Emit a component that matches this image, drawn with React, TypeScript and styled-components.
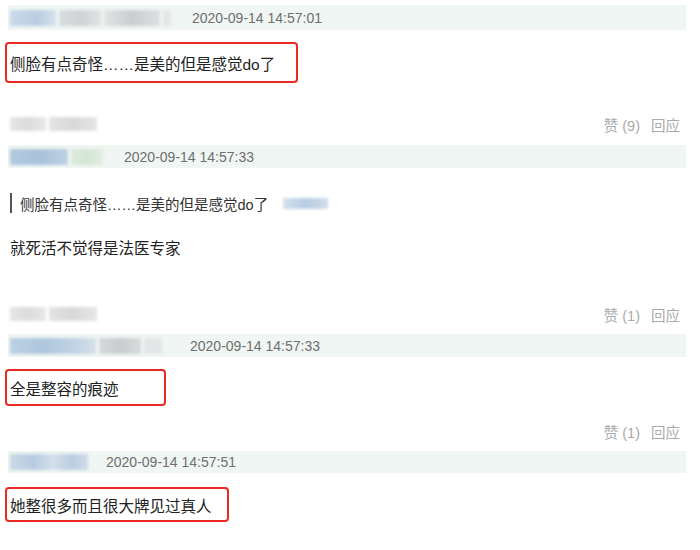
import styled, { createGlobalStyle } from 'styled-components';

const GlobalStyle = createGlobalStyle`
  body {
    margin: 0;
    background: #fff;
    font-family: 'Liberation Sans', Arial, 'Noto Sans CJK SC', sans-serif;
    color: #222;
  }
`;

const App: React.FC = () => {
  return (
    <Page>
      <GlobalStyle />

      <HeaderBar $top={5} $h={25}>
        <Names>
          <Blur $w={46} $bg="linear-gradient(90deg,#c9d9e9,#b9cde2 60%,#d6e2ec)" />
          <Blur $w={42} $bg="linear-gradient(90deg,#dadddf,#cfd3d6,#e0e3e4)" />
          <Blur $w={56} $bg="linear-gradient(90deg,#e2e5e6,#c9cdd0 50%,#dde0e1)" />
          <Blur $w={8} $bg="#e4e7e8" />
        </Names>
        <Time $left={21}>2020-09-14 14:57:01</Time>
      </HeaderBar>

      <Marked $top={12} $w={293} $h={41}>
        侧脸有点奇怪……是美的但是感觉do了
      </Marked>

      <Actions $top={31} likes={9} />

      <HeaderBar $top={11} $h={23}>
        <Names>
          <Blur $w={58} $bg="linear-gradient(90deg,#b2c9df,#a9c2db 50%,#bcd0e3)" />
          <Blur $w={32} $bg="linear-gradient(90deg,#dde9dc,#d3e6d2,#e2ede0)" />
        </Names>
        <Time $left={21}>2020-09-14 14:57:33</Time>
      </HeaderBar>

      <Quote $top={25}>
        侧脸有点奇怪……是美的但是感觉do了
        <Blur $w={45} $h={11} $bg="linear-gradient(90deg,#d3e0ec,#b8cde2 50%,#cfdcea)" />
      </Quote>

      <Plain $top={26}>就死活不觉得是法医专家</Plain>

      <Actions $top={45} likes={1} />

      <HeaderBar $top={10} $h={23}>
        <Names>
          <Blur $w={86} $bg="linear-gradient(90deg,#bcd0e3,#aec6dd 40%,#c4d5e5 80%,#d5e0ea)" />
          <Blur $w={42} $bg="linear-gradient(90deg,#d6dadc,#c8cccf,#d8dcdd)" />
          <Blur $w={18} $bg="#e3e6e7" />
        </Names>
        <Time $left={28}>2020-09-14 14:57:33</Time>
      </HeaderBar>

      <Marked $top={12} $w={161} $h={37}>
        全是整容的痕迹
      </Marked>

      <Actions $top={15} likes={1} hideLeft />

      <HeaderBar $top={10} $h={22}>
        <Names>
          <Blur $w={78} $bg="linear-gradient(90deg,#cbd9e6,#b7cbe0 30%,#d4dfe9 55%,#b9cde1 80%,#d0dce8)" />
        </Names>
        <Time $left={18}>2020-09-14 14:57:51</Time>
      </HeaderBar>

      <Marked $top={14} $w={224} $h={35}>
        她整很多而且很大牌见过真人
      </Marked>
    </Page>
  );
};

const Actions: React.FC<{ $top: number; likes: number; hideLeft?: boolean }> = ({
  $top,
  likes,
  hideLeft,
}) => (
  <ActionRow $top={$top}>
    {hideLeft ? (
      <span />
    ) : (
      <Names>
        <Blur $w={36} $h={14} $bg="linear-gradient(90deg,#e6e6e6,#dcdcdc,#e8e8e8)" />
        <Blur $w={48} $h={14} $bg="linear-gradient(90deg,#e3e3e3,#d8d8d8 50%,#e6e6e6)" />
      </Names>
    )}
    <ActionLinks>
      <span>赞 ({likes})</span>
      <span>回应</span>
    </ActionLinks>
  </ActionRow>
);

const Page = styled.div`
  width: 678px;
  padding: 0 14px 0 8px;
  display: flex;
  flex-direction: column;
  align-items: flex-start;
`;

const HeaderBar = styled.div<{ $top: number; $h: number }>`
  align-self: stretch;
  margin-top: ${(p) => p.$top}px;
  height: ${(p) => p.$h}px;
  background: #f0f6f3;
  display: flex;
  align-items: center;
  padding-left: 2px;
`;

const Names = styled.div`
  display: flex;
  align-items: center;
  gap: 3px;
`;

const Blur = styled.span<{ $w: number; $h?: number; $bg: string }>`
  display: inline-block;
  width: ${(p) => p.$w}px;
  height: ${(p) => p.$h ?? 16}px;
  background: ${(p) => p.$bg};
  filter: blur(1.5px);
  vertical-align: middle;
`;

const Time = styled.span<{ $left: number }>`
  margin-left: ${(p) => p.$left}px;
  font-size: 14px;
  color: #6f6f6f;
`;

const Marked = styled.div<{ $top: number; $w: number; $h: number }>`
  margin-top: ${(p) => p.$top}px;
  margin-left: -3px;
  width: ${(p) => p.$w}px;
  height: ${(p) => p.$h}px;
  box-sizing: border-box;
  border: 2.5px solid #ec2a24;
  border-radius: 4px;
  display: flex;
  align-items: center;
  padding-left: 3px;
  font-size: 15.5px;
  color: #222;
  white-space: nowrap;
`;

const Quote = styled.div<{ $top: number }>`
  margin-top: ${(p) => p.$top}px;
  margin-left: 2px;
  height: 20px;
  display: flex;
  align-items: center;
  gap: 15px;
  border-left: 2px solid #555;
  padding-left: 8px;
  font-size: 14.5px;
  color: #333;
`;

const Plain = styled.div<{ $top: number }>`
  margin-top: ${(p) => p.$top}px;
  margin-left: 2px;
  height: 20px;
  line-height: 20px;
  font-size: 15.5px;
  color: #222;
`;

const ActionRow = styled.div<{ $top: number }>`
  align-self: stretch;
  margin-top: ${(p) => p.$top}px;
  height: 20px;
  padding-left: 2px;
  padding-right: 6px;
  display: flex;
  align-items: center;
  justify-content: space-between;
`;

const ActionLinks = styled.div`
  display: flex;
  gap: 11px;
  font-size: 14.5px;
  color: #aaa;
`;

export default App;
